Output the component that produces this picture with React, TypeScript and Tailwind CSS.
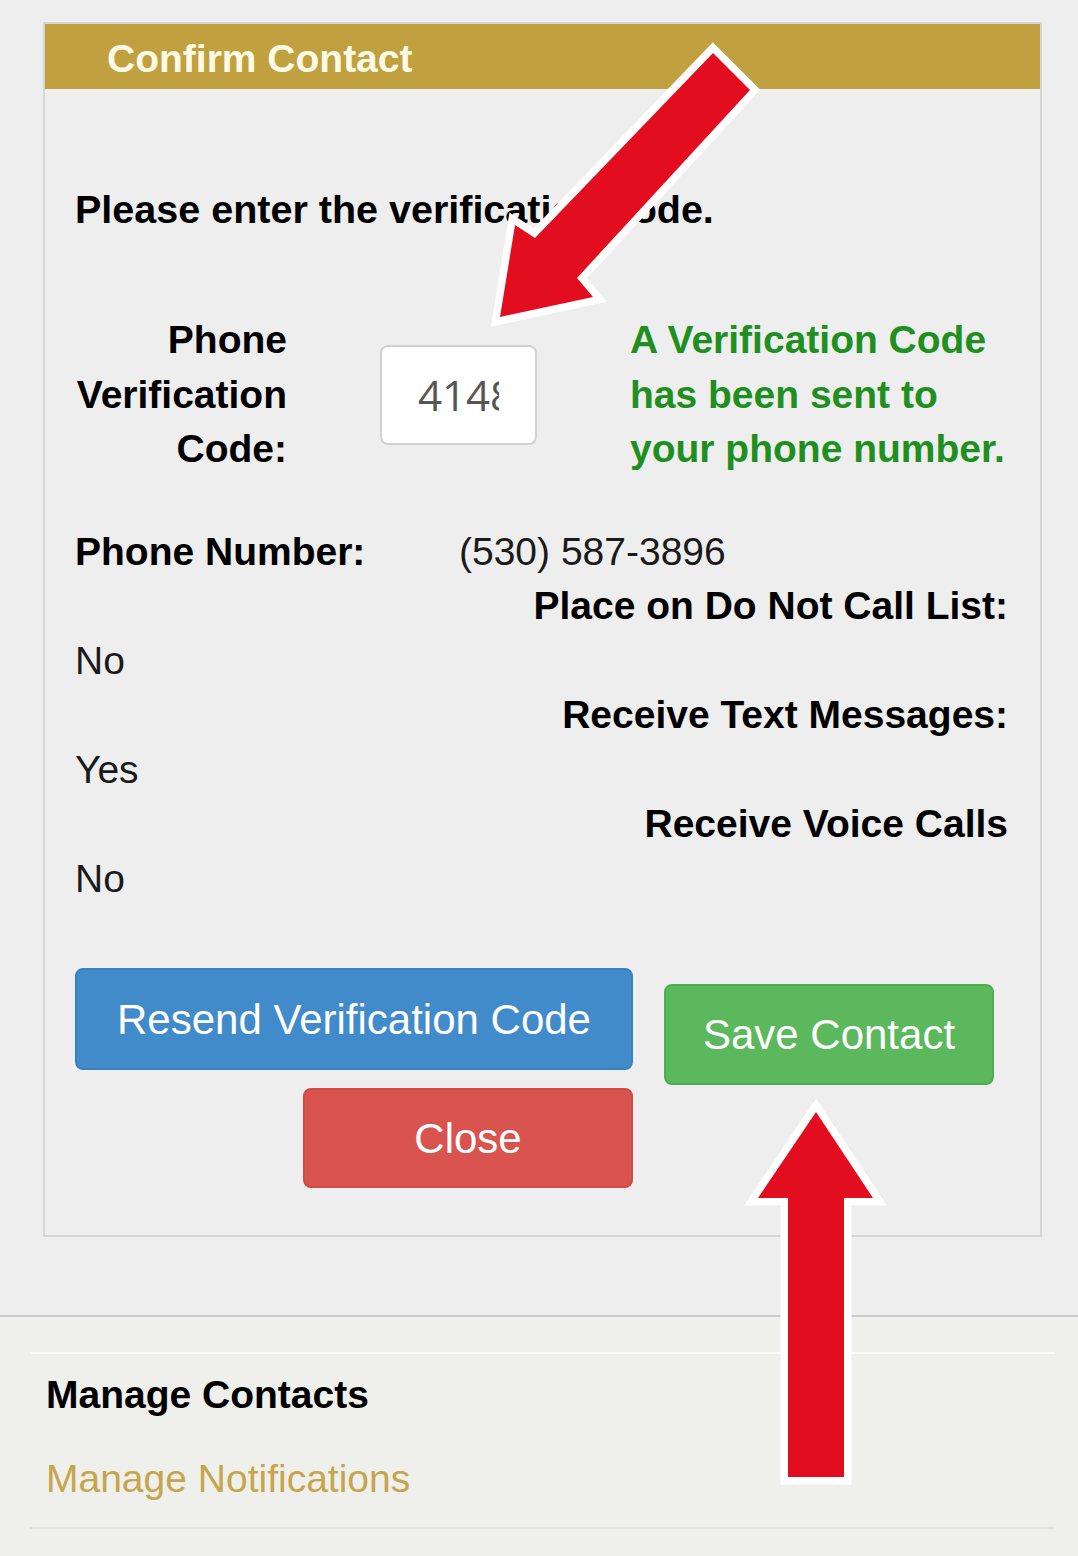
import React from "react";

const infoRows = [
    { label: "Place on Do Not Call List:", value: "No" },
    { label: "Receive Text Messages:", value: "Yes" },
    { label: "Receive Voice Calls", value: "No" },
];

function Arrows() {
    return (
        <svg
            className="absolute inset-0 pointer-events-none"
            width="1078"
            height="1556"
            viewBox="0 0 1078 1556"
        >
            {/* diagonal arrow pointing at the code input */}
            <polygon
                points="713,53 750,90 577,278 593,297 500,317 515,225 535,238"
                fill="#e20d1f"
                stroke="#ffffff"
                strokeWidth={15}
                strokeLinejoin="miter"
                paintOrder="stroke"
            />
            {/* upward arrow pointing at Save Contact */}
            <polygon
                points="816,1112 873,1198 844,1198 844,1477 788,1477 788,1198 758,1198"
                fill="#e20d1f"
                stroke="#ffffff"
                strokeWidth={15}
                strokeLinejoin="miter"
                paintOrder="stroke"
            />
        </svg>
    );
}

export default function App() {
    return (
        <div className="relative w-[1078px] min-h-[1556px] bg-[#eeeeee] pt-[22px] font-['Liberation_Sans',Arial,sans-serif] text-black overflow-hidden">
            {/* Confirm Contact panel */}
            <div className="ml-[43px] w-[999px] border-2 border-[#d6d6d6]">
                <div className="h-[65px] bg-[#c1a040] pl-[62px] pt-[8px]">
                    <div className="text-[39px] leading-[54px] font-bold text-[#fffbe6]">Confirm Contact</div>
                </div>

                <div className="pl-[30px] pr-[32px] pt-[93px] pb-[47px]">
                    <p className="text-[39.5px] leading-[54px] font-bold whitespace-nowrap">Please enter the verification code.</p>

                    <div className="mt-[77px] flex items-center">
                        <div className="w-[212px] text-right text-[39px] leading-[54.5px] font-bold whitespace-nowrap">
                            <div>Phone</div>
                            <div>Verification</div>
                            <div>Code:</div>
                        </div>
                        <input
                            readOnly
                            value="4148"
                            className="ml-[93px] w-[157px] h-[100px] rounded-[8px] border-2 border-[#d2d2d2] bg-white px-[36px] text-[42px] text-[#555555] font-['Open_Sans',sans-serif] outline-none"
                        />
                        <div className="ml-[93px] text-[39px] leading-[54.5px] font-bold text-[#1f8f1f] whitespace-nowrap">
                            <div>A Verification Code</div>
                            <div>has been sent to</div>
                            <div>your phone number.</div>
                        </div>
                    </div>

                    <div className="mt-[48px] text-[39px] leading-[54.5px]">
                        <div className="flex">
                            <div className="w-[384px] font-bold">Phone Number:</div>
                            <div className="text-[#1a1a1a]">(530) 587-3896</div>
                        </div>
                        {infoRows.map((row) => (
                            <div key={row.label}>
                                <div className="text-right font-bold">{row.label}</div>
                                <div className="text-[#1a1a1a]">{row.value}</div>
                            </div>
                        ))}
                    </div>

                    <div className="mt-[62px] flex items-start">
                        <div className="w-[558px] flex flex-col">
                            <button className="h-[102px] w-full rounded-[8px] border-2 border-[#3a81c0] bg-[#428bca] text-[42px] text-white">
                                Resend Verification Code
                            </button>
                            <button className="mt-[18px] ml-auto h-[100px] w-[330px] rounded-[8px] border-2 border-[#d14a45] bg-[#d9534f] text-[42px] text-white">
                                Close
                            </button>
                        </div>
                        <button className="ml-[31px] mt-[16px] h-[101px] w-[330px] rounded-[8px] border-2 border-[#4cae4c] bg-[#5cb85c] text-[42px] text-white">
                            Save Contact
                        </button>
                    </div>
                </div>
            </div>

            {/* bottom navigation */}
            <div className="mt-[78px] border-t-2 border-[#cbcbcb] bg-[#eff0eb] pt-[35px] pl-[30px] pr-[23px] pb-[30px]">
                <div className="border-t-2 border-[#fbfbf9] pt-[14px] px-[16px]">
                    <div className="text-[39px] leading-[54px] font-bold">Manage Contacts</div>
                    <div className="mt-[30px] text-[39px] leading-[54px] text-[#c6a54e]">Manage Notifications</div>
                </div>
                <div className="mt-[21px] border-t-2 border-[#e2e3de]" />
            </div>

            <Arrows />
        </div>
    );
}
